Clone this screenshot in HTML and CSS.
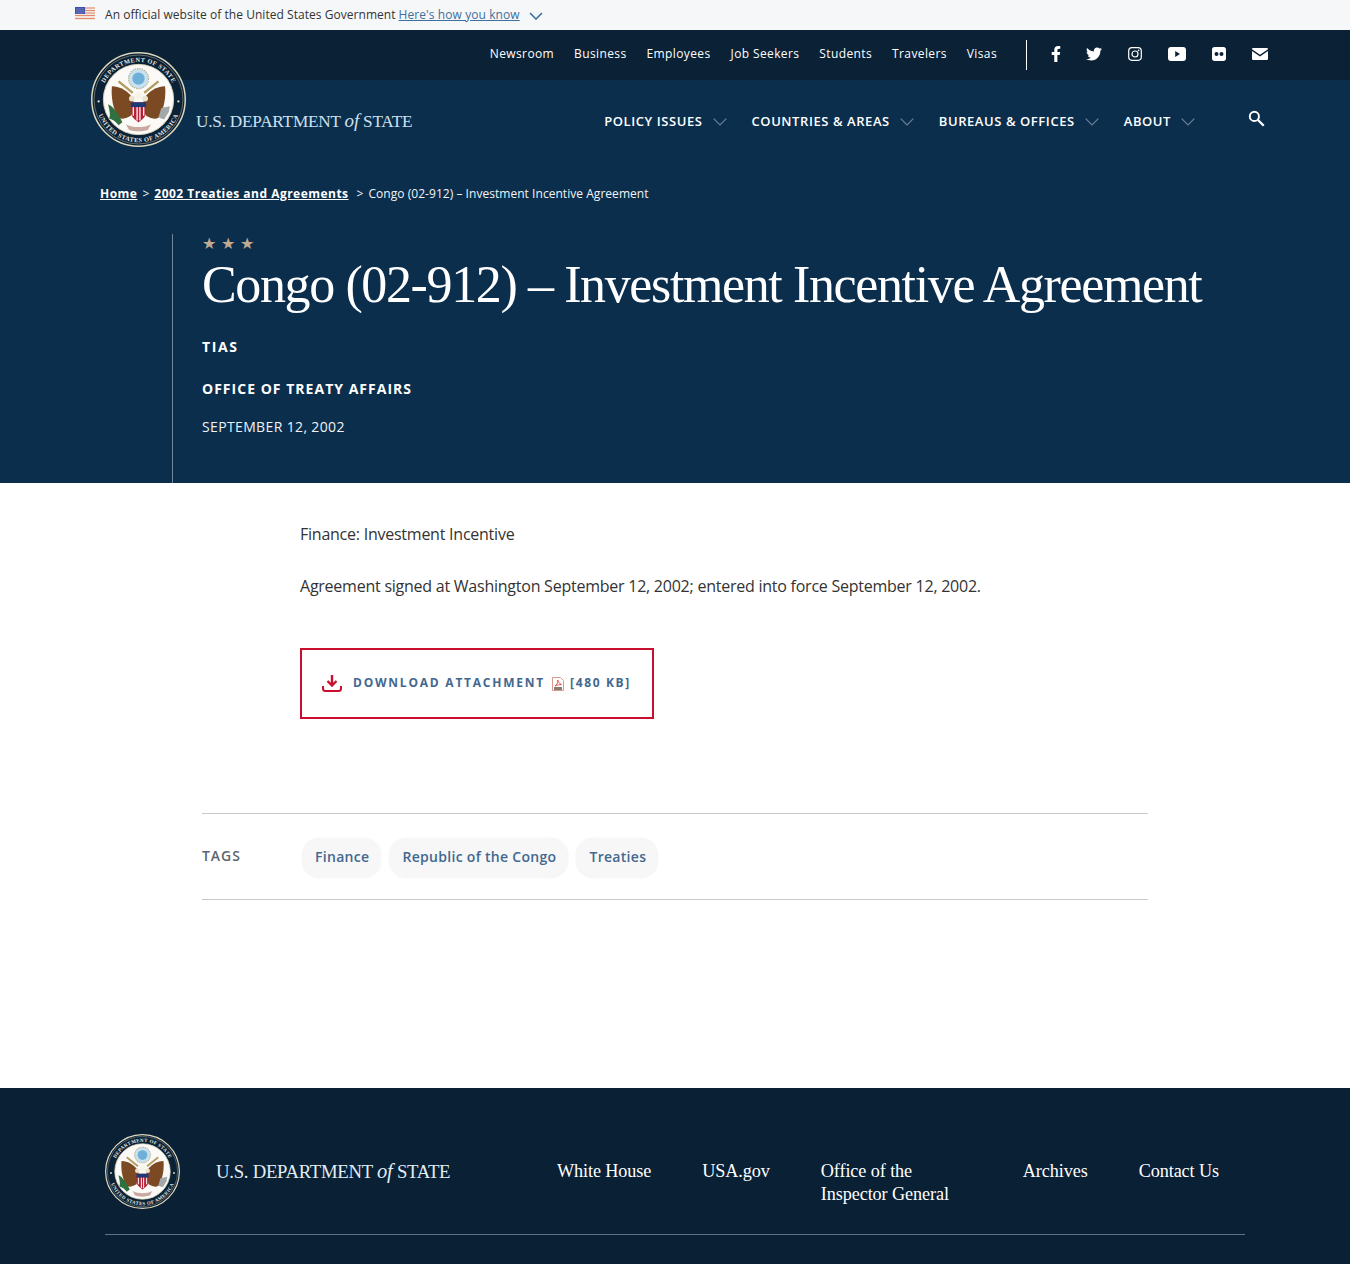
FILE: index.html
```html
<!DOCTYPE html>
<html lang="en">
<head>
<meta charset="utf-8">
<title>Congo (02-912) – Investment Incentive Agreement</title>
<link rel="stylesheet" href="styles.css">
</head>
<body>
<svg class="defs" width="0" height="0" aria-hidden="true">
  <defs>
    <symbol id="seal" viewBox="0 0 100 100">
      <circle cx="50" cy="50" r="49.2" fill="#0a2136" stroke="#ddd7bd" stroke-width="1.6"/>
      <circle cx="50" cy="50" r="46.8" fill="none" stroke="#c9c2a2" stroke-width=".5"/>
      <path id="arcTop" d="M10.500 50a39.500 39.500 0 0 1 79 0" fill="none"/>
      <path id="arcBot" d="M5 50a45 45 0 0 0 90 0" fill="none"/>
      <text class="seal-text"><textPath href="#arcTop" startOffset="50%" text-anchor="middle">DEPARTMENT OF STATE</textPath></text>
      <text class="seal-text"><textPath href="#arcBot" startOffset="50%" text-anchor="middle">UNITED STATES OF AMERICA</textPath></text>
      <circle cx="8" cy="52" r="1.2" fill="#e8e4cf"/><circle cx="92" cy="52" r="1.2" fill="#e8e4cf"/>
      <circle cx="50" cy="50" r="37" fill="#fbfaf6" stroke="#d9d3b8" stroke-width="1"/>
      <circle cx="50" cy="28" r="10.500" fill="#c9e2f0" stroke="#b9b394" stroke-width="1.4" stroke-dasharray="1.5 1"/>
      <circle cx="50" cy="28" r="6.500" fill="#6fb0d8"/>
      <path d="M29 31l15 12M71 31L56 43" stroke="#b49a5e" stroke-width="2.400"/>
      <path d="M22 36c9 0 17 5 23 14l-3 17c-6 3-11 5-14 1-5-9-7-21-6-32z" fill="#7b4a23"/>
      <path d="M78 36c-9 0-17 5-23 14l3 17c6 3 11 5 14 1 5-9 7-21 6-32z" fill="#7b4a23"/>
      <circle cx="50" cy="46" r="4" fill="#f6f3e8"/><circle cx="43" cy="49" r="3" fill="#e9e3cf"/><circle cx="57" cy="49" r="3" fill="#e9e3cf"/>
      <path d="M42 53h16v11c0 4-5 8-8 10-3-2-8-6-8-10z" fill="#b4223a"/>
      <path d="M44.500 58v9M48.500 58v14M51.500 58v14M55.500 58v9" stroke="#fff" stroke-width="1.300"/>
      <path d="M42 53h16v5H42z" fill="#1c3a75"/>
      <path d="M18 55c5 2 10 9 15 19l-4 3c-3-4-6-6-10-7 2-3 0-10-1-15z" fill="#2e7040"/>
      <path d="M71 69l3-10 9-2-1 6-5 8z" fill="#a3a8a8"/>
      <path d="M37 76c7 4 19 4 26 0l-3 6c-6 2-14 2-20 0z" fill="#c9a9a0"/>
    </symbol>
    <symbol id="chev" viewBox="0 0 14 8">
      <path d="M.7.7 7 7l6.300-6.300" fill="none" stroke="currentColor" stroke-width="1.100"/>
    </symbol>
  </defs>
</svg>

<div class="gov-banner">
  <svg class="flag" viewBox="0 0 20 13" width="20" height="13" aria-hidden="true">
    <rect width="20" height="13" fill="#f3e4dc"/>
    <path d="M0 1h20M0 3.500h20M0 6h20M0 8.500h20M0 11.500h20" stroke="#e08a72" stroke-width="1.100"/>
    <rect width="10" height="7" fill="#3f4fa8"/>
    <path d="M1.500 2h7M1.500 4h7M1.500 6h7" stroke="#c9d0f0" stroke-width=".7" stroke-dasharray="1 1"/>
  </svg>
  <span class="gov-text">An official website of the United States Government</span>
  <a class="gov-link" href="#">Here's how you know</a>
  <svg class="gov-chev" viewBox="0 0 14 8" width="14" height="8" aria-hidden="true"><path d="M1 1l6 6 6-6" fill="none" stroke="currentColor" stroke-width="1.600"/></svg>
</div>

<header class="masthead">
  <div class="utility">
    <nav class="utility-links">
      <a href="#">Newsroom</a><a href="#">Business</a><a href="#">Employees</a><a href="#">Job Seekers</a><a href="#">Students</a><a href="#">Travelers</a><a href="#">Visas</a>
    </nav>
    <div class="socials">
      <svg class="ico-fb" viewBox="0 0 320 512" aria-label="Facebook"><path d="M279.14 288l14.22-92.66h-88.91v-60.13c0-25.35 12.42-50.06 52.24-50.06h40.42V6.26S260.43 0 225.36 0c-73.22 0-121.08 44.38-121.08 124.72v70.62H22.89V288h81.39v224h100.17V288z"/></svg>
      <svg class="ico-tw" viewBox="0 0 512 512" aria-label="Twitter"><path d="M459.37 151.716c.325 4.548.325 9.097.325 13.645 0 138.72-105.583 298.558-298.558 298.558-59.452 0-114.68-17.219-161.137-47.106 8.447.974 16.568 1.299 25.34 1.299 49.055 0 94.213-16.568 130.274-44.832-46.132-.975-84.792-31.188-98.112-72.772 6.498.974 12.995 1.624 19.818 1.624 9.421 0 18.843-1.3 27.614-3.573-48.081-9.747-84.143-51.98-84.143-102.985v-1.299c13.969 7.797 30.214 12.67 47.431 13.319-28.264-18.843-46.781-51.005-46.781-87.391 0-19.492 5.197-37.36 14.294-52.954 51.655 63.675 129.3 105.258 216.365 109.807-1.624-7.797-2.599-15.918-2.599-24.04 0-57.828 46.782-104.934 104.934-104.934 30.213 0 57.502 12.67 76.67 33.137 23.715-4.548 46.456-13.645 66.599-25.34-7.798 24.366-24.366 44.833-46.132 57.827 21.117-2.273 41.584-8.122 60.426-16.243-14.292 20.791-32.161 39.308-52.628 54.253z"/></svg>
      <svg class="ico-ig" viewBox="0 0 14 14" aria-label="Instagram"><rect x=".7" y=".7" width="12.600" height="12.600" rx="3.200" fill="none" stroke="#fff" stroke-width="1.200"/><circle cx="7" cy="7" r="3" fill="none" stroke="#fff" stroke-width="1.200"/><circle cx="10.600" cy="3.400" r=".8" fill="#fff"/></svg>
      <svg class="ico-yt" viewBox="0 0 18 14" aria-label="YouTube"><path fill-rule="evenodd" d="M3 0h12c2 0 3 1.300 3 3v8c0 1.700-1 3-3 3H3c-2 0-3-1.300-3-3V3c0-1.700 1-3 3-3zm4.200 4v6L12 7z"/></svg>
      <svg class="ico-fl" viewBox="0 0 14 14" aria-label="Flickr"><path fill-rule="evenodd" d="M2.500 0h9C13 0 14 1 14 2.500v9c0 1.500-1 2.500-2.500 2.500h-9C1 14 0 13 0 11.500v-9C0 1 1 0 2.500 0zM4.500 5a2 2 0 1 0 0 4 2 2 0 0 0 0-4zm5 0a2 2 0 1 0 0 4 2 2 0 0 0 0-4z"/></svg>
      <svg class="ico-ml" viewBox="0 0 16 12" aria-label="Email"><path d="M1.300 0h13.400c.7 0 1.300.5 1.300 1.200L8 6.800 0 1.200C0 .5.600 0 1.300 0zM0 3l8 5.600L16 3v7.700c0 .7-.6 1.300-1.300 1.300H1.300C.6 12 0 11.400 0 10.700z"/></svg>
    </div>
  </div>

  <div class="mainbar">
    <a class="brand" href="#">
      <svg class="brand-seal" aria-hidden="true"><use href="#seal"/></svg>
      <span class="brand-name">U.S. DEPARTMENT <i>of</i> STATE</span>
    </a>
    <nav class="mainnav">
      <a href="#">POLICY ISSUES<svg width="14" height="8" aria-hidden="true"><use href="#chev"/></svg></a>
      <a href="#">COUNTRIES &amp; AREAS<svg width="14" height="8" aria-hidden="true"><use href="#chev"/></svg></a>
      <a href="#">BUREAUS &amp; OFFICES<svg width="14" height="8" aria-hidden="true"><use href="#chev"/></svg></a>
      <a href="#">ABOUT<svg width="14" height="8" aria-hidden="true"><use href="#chev"/></svg></a>
    </nav>
    <svg class="search" viewBox="0 0 16 16" aria-label="Search"><circle cx="6" cy="6" r="4.300" fill="none" stroke="#fff" stroke-width="1.800"/><path d="M9.200 9.200l5.600 5.600" stroke="#fff" stroke-width="2.200"/></svg>
  </div>

  <div class="crumbs">
    <a href="#">Home</a><span class="sep">&gt;</span><a href="#">2002 Treaties and Agreements</a><span class="sep sep-wide">&gt;</span><span>Congo (02-912) – Investment Incentive Agreement</span>
  </div>

  <div class="hero">
    <div class="stars">★★★</div>
    <h1>Congo (02-912) – Investment Incentive Agreement</h1>
    <div class="meta-type">TIAS</div>
    <div class="meta-office">OFFICE OF TREATY AFFAIRS</div>
    <div class="meta-date">SEPTEMBER 12, 2002</div>
  </div>
</header>

<main class="content">
  <div class="body-copy">
    <p>Finance: Investment Incentive</p>
    <p>Agreement signed at Washington September 12, 2002; entered into force September 12, 2002.</p>
    <a class="download" href="#">
      <svg class="dl-ico" viewBox="0 0 20 18" width="20" height="18" aria-hidden="true"><path d="M10 1v10M5.500 7l4.500 4.500L14.500 7" fill="none" stroke="#c8102e" stroke-width="2.400"/><path d="M1 12v2.500C1 16 2 17 3.500 17h13c1.500 0 2.500-1 2.500-2.500V12" fill="none" stroke="#c8102e" stroke-width="2"/></svg>
      <span class="dl-label">DOWNLOAD ATTACHMENT</span>
      <svg class="pdf-ico" viewBox="0 0 12 14" width="12" height="14" aria-hidden="true"><path d="M.5.500h8l3 3v10H.5z" fill="#fff" stroke="#d99a8c"/><path d="M3 9c2-1 3-4 2.700-6 .8 2 2 4 3.800 4.600C7 7.500 5 8 3 9z" fill="none" stroke="#d8352a" stroke-width=".8"/><rect x="2" y="10" width="8" height="3" fill="#8a7a70"/></svg>
      <span class="dl-size">[480 KB]</span>
    </a>
  </div>
  <div class="tags">
    <span class="tags-label">TAGS</span>
    <div class="tag-list">
      <a href="#">Finance</a><a href="#">Republic of the Congo</a><a href="#">Treaties</a>
    </div>
  </div>
</main>

<footer class="footer">
  <div class="footer-row">
    <a class="foot-brand" href="#">
      <svg class="foot-seal" aria-hidden="true"><use href="#seal"/></svg>
      <span class="foot-name">U.S. DEPARTMENT <i>of</i> STATE</span>
    </a>
    <nav class="foot-links">
      <a href="#">White House</a><a href="#">USA.gov</a><a class="foot-oig" href="#">Office of the Inspector General</a><a href="#">Archives</a><a href="#">Contact Us</a>
    </nav>
  </div>
</footer>
</body>
</html>
```
FILE: styles.css
```css
* { box-sizing: border-box; }
html, body { margin: 0; padding: 0; }
body { font-family: "Open Sans", sans-serif; background: #fff; color: #333; height: 1264px; overflow: hidden; }
a { color: inherit; }
.defs { position: absolute; }
.seal-text { font: 700 6.6px "Liberation Serif", serif; fill: #e8e8e0; letter-spacing: .5px; }

.gov-banner { height: 30px; background: #f6f7f8; padding: 0 0 2px 75px; display: flex; align-items: center; font-size: 12px; letter-spacing: .04px; color: #333; }
.flag { margin: -1px 10px 0 0; }
.gov-link { color: #3f6f9c; margin-left: 3px; letter-spacing: .08px; }
.gov-chev { margin-left: 9px; margin-top: 3px; color: #3f6f9c; }

.masthead { background: #0b2e4d; color: #fff; height: 453px; }
.utility { height: 50px; background: #0a2136; display: flex; justify-content: flex-end; align-items: center; padding-right: 82px; }
.utility-links { display: flex; gap: 20px; font-size: 12px; letter-spacing: .38px; padding: 0 29px 4px 0; height: 30px; align-items: center; border-right: 1px solid #fff; }
.utility-links a { text-decoration: none; }
.socials { display: flex; align-items: center; padding-left: 24px; fill: #fff; width: 241px; margin-top: -2px; }
.socials svg { display: block; height: 16px; }
.ico-fb { width: 10px; }
.ico-tw { width: 16px; margin-left: 25px; }
.ico-ig { width: 14px; margin-left: 26px; height: 14px !important; }
.ico-yt { width: 18px; margin-left: 26px; height: 14px !important; }
.ico-fl { width: 14px; margin-left: 26px; height: 14px !important; }
.ico-ml { width: 16px; margin-left: 26px; height: 12px !important; }

.mainbar { display: flex; align-items: center; height: 80px; padding: 0 85px 0 91px; }
.brand { display: flex; align-items: center; text-decoration: none; margin-top: 1px; }
.brand-seal { width: 95px; height: 95px; margin-top: -42px; flex: none; }
.brand-name { font: 400 17.2px "Liberation Serif", serif; color: #cfe0ee; margin-left: 10px; letter-spacing: -.2px; white-space: nowrap; }
.brand-name i { font-size: 19px; }
.mainnav { display: flex; margin-left: auto; font-size: 13px; font-weight: 600; letter-spacing: .57px; gap: 25px; margin-top: 2px; }
.mainnav a { text-decoration: none; display: flex; align-items: center; white-space: nowrap; }
.mainnav svg { color: #6c8299; margin-left: 10px; margin-top: 1px; }
.search { width: 17px; height: 17px; margin-left: 53px; margin-top: -3px; }

.crumbs { padding: 25px 0 0 100px; font-size: 12px; height: 74px; line-height: 18px; letter-spacing: .04px; color: #f2f4f6; }
.crumbs a { font-weight: 700; letter-spacing: .48px; color: #fff; }
.sep { margin: 0 5px; }
.sep-wide { margin: 0 5px 0 8px; }

.hero { margin-left: 172px; height: 249px; border-left: 1px solid #6f8699; padding: 0 0 0 29px; }
.stars { color: #c3aa8e; font-size: 16px; letter-spacing: 5px; line-height: 18px; }
h1 { margin: 0; font: 400 52px/66px "Liberation Serif", serif; color: #fff; letter-spacing: -1.38px; white-space: nowrap; }
.meta-type { font-size: 14px; font-weight: 700; letter-spacing: 1.6px; margin-top: 19px; line-height: 20px; }
.meta-office { font-size: 14px; font-weight: 700; letter-spacing: 1.02px; margin-top: 22px; line-height: 20px; }
.meta-date { font-size: 14px; letter-spacing: .36px; margin-top: 18px; line-height: 20px; color: #f0f3f6; }

.content { height: 605px; }
.body-copy { padding: 40px 0 0 300px; font-size: 16px; letter-spacing: -.24px; line-height: 22px; color: #333; }
.body-copy p { margin: 0 0 30px; }
.download { display: inline-flex; align-items: center; width: 354px; height: 71px; margin-top: 21px; border: 2px solid #c8102e; padding: 0 0 2px 20px; text-decoration: none; font-size: 12px; font-weight: 700; letter-spacing: 1.77px; color: #43688f; }
.dl-label { margin-left: 11px; }
.pdf-ico { margin-left: 7px; margin-top: 3px; }
.dl-size { margin-left: 6px; letter-spacing: 1.65px; }

.tags { margin: 94px 202px 0; height: 87px; border-top: 1px solid #c9c9c9; border-bottom: 1px solid #c9c9c9; display: flex; align-items: center; }
.tags-label { width: 98px; font-size: 14px; font-weight: 600; color: #5c6670; letter-spacing: .95px; margin-top: -2px; }
.tag-list { display: flex; gap: 8px; margin-top: 3px; padding-left: 2px; }
.tag-list a { display: block; height: 40px; line-height: 38px; padding: 0 12px 0 13px; border-radius: 18px; background: #f7f7f8; box-shadow: 0 0 2px #eceeef; font-size: 14px; font-weight: 600; letter-spacing: .3px; color: #43688f; text-decoration: none; }

.footer { height: 176px; background: #0a2035; color: #fff; padding: 46px 105px 0; }
.footer-row { height: 101px; border-bottom: 1px solid #5f7384; display: flex; align-items: flex-start; }
.foot-brand { display: flex; align-items: center; text-decoration: none; }
.foot-seal { width: 75px; height: 75px; flex: none; }
.foot-name { font: 400 18.7px "Liberation Serif", serif; color: #e3edf5; margin-left: 36px; margin-top: -1px; letter-spacing: -.25px; white-space: nowrap; }
.foot-name i { font-size: 20.5px; }
.foot-links { display: flex; margin-left: auto; font: 400 18.2px/23px "Liberation Serif", serif; gap: 51px; padding-top: 26px; margin-right: 26px; letter-spacing: -.1px; }
.foot-links a { text-decoration: none; white-space: nowrap; }
.foot-links .foot-oig { white-space: normal; width: 151px; }
```
